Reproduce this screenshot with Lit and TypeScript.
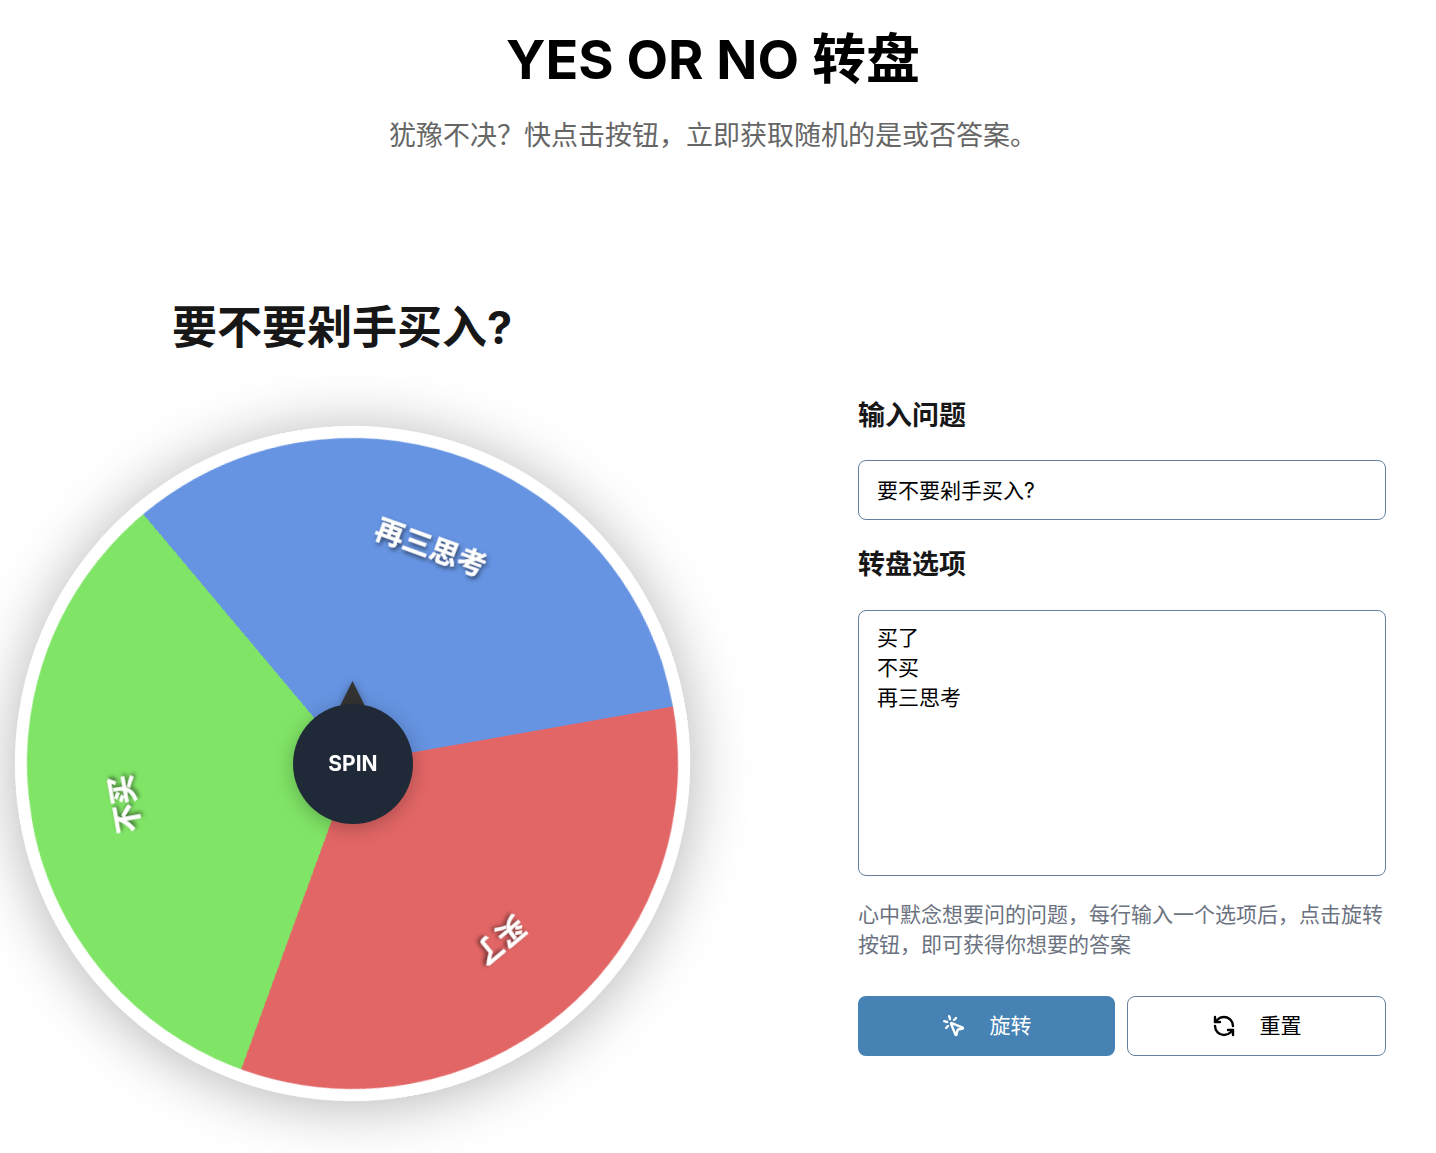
import { LitElement, html, css } from "lit";
import { customElement } from "lit/decorators.js";

@customElement("app-root")
export class AppRoot extends LitElement {
  static styles = css`
    :host { display: block; height: 1153px; overflow: hidden; background: #fff; font-family: Inter, "Noto Sans CJK SC", sans-serif; color: #171717; }
    * { box-sizing: border-box; }
    .head { text-align: center; padding: 24px 10px 0 0; }
    h1 { margin: 0; font-size: 54px; line-height: 72px; font-weight: 700; color: #000; }
    .sub { margin: 20px 0 0; font-size: 27px; line-height: 40px; color: #666; }
    .main { display: grid; grid-template-columns: 675px 528px; column-gap: 168px; padding: 0 0 0 15px; margin-top: 142px; }
    .left h2 { margin: 0 0 0 157px; font-size: 45px; line-height: 60px; font-weight: 700; }
    .wheel { position: relative; width: 675px; height: 675px; margin-top: 68px; border-radius: 50%; box-shadow: 0 4px 60px rgba(0,0,0,.3); }
    .disc { position: absolute; inset: 0; border-radius: 50%; border: 12px solid #fff; transform: rotate(80deg); will-change: transform;
      background: conic-gradient(#e36666 0 120deg, #80e566 120deg 240deg, #6694e2 240deg 360deg); background-origin: border-box; }
    .seg { position: absolute; left: 50%; top: 50%; width: 0; height: 0; }
    .seg span { position: absolute; left: 0; top: 0; transform: translate(-50%, -50%); white-space: nowrap; color: #fff; font-weight: 700; font-size: 29px; line-height: 36px; -webkit-text-stroke: .4px #fff; text-shadow: 2px 2px 4px rgba(0,0,0,.6); }
    .pointer { position: absolute; left: 325px; top: 255px; width: 25px; height: 25px; background: #333; clip-path: polygon(50% 0, 100% 100%, 0 100%); }
    .pointer-wrap { position: absolute; inset: 0; filter: drop-shadow(0 0 4px rgba(0,0,0,.3)); }
    .hub { position: absolute; left: 278px; top: 278px; width: 120px; height: 120px; padding-bottom: 2px; border-radius: 50%; background: #1f2937; color: #fff; display: flex; align-items: center; justify-content: center; font-size: 21px; font-weight: 700; box-shadow: 0 4px 20px rgba(0,0,0,.25); }
    .right { margin-top: 98px; display: flex; flex-direction: column; }
    label { font-size: 27px; line-height: 40px; font-weight: 700; margin-bottom: 25px; display: block; }
    .field { margin-bottom: 25px; width: 100%; border: 1px solid #64809c; border-radius: 8px; background: #fff; font: inherit; font-size: 21px; line-height: 30px; color: #000; padding: 12px 18px 11px; outline: none; display: block; }
    input.field { height: 60px; margin-top: -1px; padding: 10px 18px 12px; }
    textarea.field { height: 266px; resize: none; margin: 0; }
    .hint { margin: 24px 0 0; font-size: 21px; line-height: 30px; color: #6b7280; }
    .btns { display: flex; gap: 12px; margin-top: 36px; }
    button { height: 60px; border-radius: 8px; font: inherit; font-size: 21px; display: flex; align-items: center; justify-content: center; gap: 24px; cursor: pointer; }
    button span { margin-bottom: 4px; }
    .spin { width: 257px; background: #4682b4; color: #fff; border: 0; }
    .reset { width: 259px; background: #fff; color: #000; border: 1px solid #64809c; }
    svg { width: 24px; height: 24px; fill: none; stroke: currentColor; stroke-width: 2.4; stroke-linecap: round; stroke-linejoin: round; }
  `;

  render() {
    const segs = [["买了", 60], ["不买", 180], ["再三思考", 300]] as const;
    return html`
      <header class="head">
        <h1>YES OR NO 转盘</h1>
        <p class="sub">犹豫不决\uFF1F快点击按钮\uFF0C立即获取随机的是或否答案。</p>
      </header>
      <main class="main">
        <section class="left">
          <h2>要不要剁手买入?</h2>
          <div class="wheel">
            <div class="disc">
              ${segs.map(([t, a]) => html`<div class="seg" style="transform: rotate(${a}deg) translateY(-230px)"><span>${t}</span></div>`)}
            </div>
            <div class="pointer-wrap"><div class="pointer"></div></div>
            <div class="hub">SPIN</div>
          </div>
        </section>
        <section class="right">
          <label>输入问题</label>
          <input class="field" .value=${"要不要剁手买入?"} />
          <label>转盘选项</label>
          <textarea class="field" .value=${"买了\n不买\n再三思考"}></textarea>
          <p class="hint">心中默念想要问的问题\uFF0C每行输入一个选项后\uFF0C点击旋转按钮\uFF0C即可获得你想要的答案</p>
          <div class="btns">
            <button class="spin">
              <svg viewBox="0 0 24 24"><path d="M14 4.1 12 6"/><path d="m5.1 8-2.9-.8"/><path d="m6 12-1.9 2"/><path d="M7.2 2.2 8 5.1"/><path d="M9.037 9.69a.498.498 0 0 1 .653-.653l11 4.5a.5.5 0 0 1-.074.949l-4.349 1.041a1 1 0 0 0-.74.739l-1.04 4.35a.5.5 0 0 1-.95.074z"/></svg>
              <span>旋转</span>
            </button>
            <button class="reset">
              <svg viewBox="0 0 24 24"><path d="M21 12a9 9 0 0 0-9-9 9.75 9.75 0 0 0-6.74 2.74L3 8"/><path d="M3 3v5h5"/><path d="M3 12a9 9 0 0 0 9 9 9.75 9.75 0 0 0 6.74-2.74L21 16"/><path d="M16 16h5v5"/></svg>
              <span>重置</span>
            </button>
          </div>
        </section>
      </main>
    `;
  }
}
